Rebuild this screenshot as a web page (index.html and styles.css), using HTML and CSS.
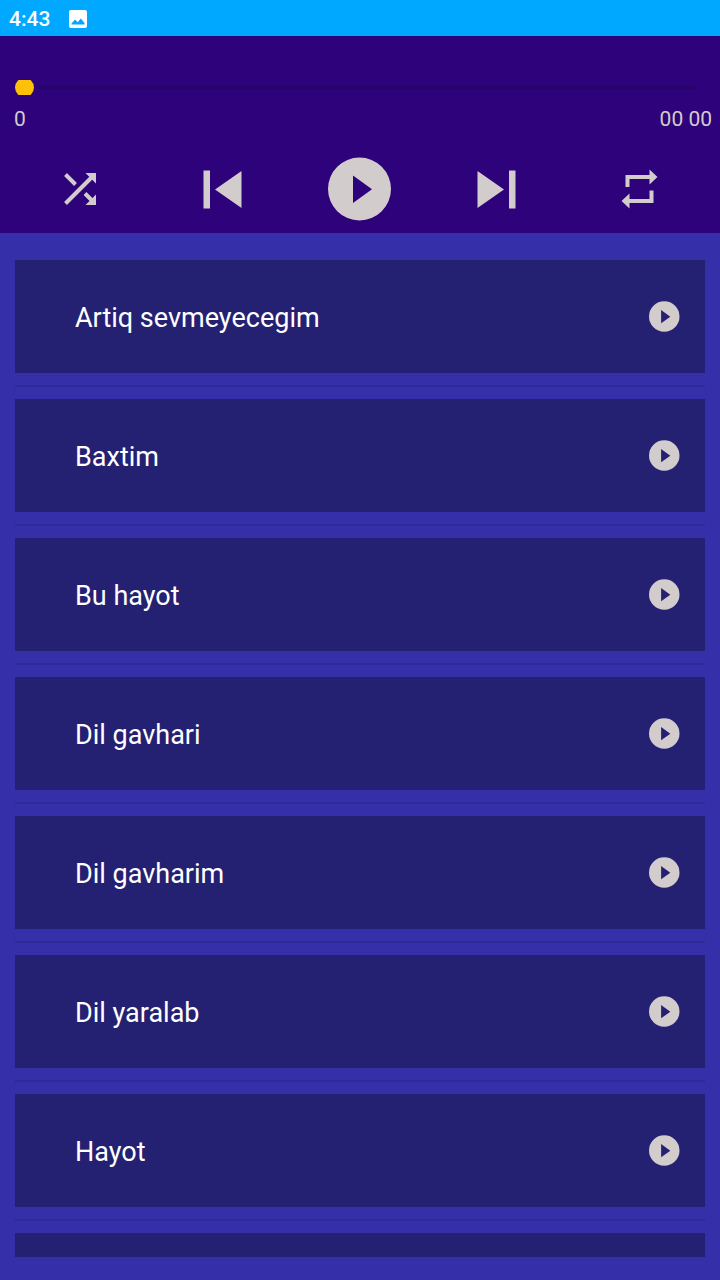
FILE: index.html
```html
<!DOCTYPE html>
<html lang="uz">
<head>
    <meta charset="UTF-8">
    <meta name="viewport" content="width=device-width, initial-scale=1.0">
    <title>Music Player</title>
    <link rel="stylesheet" href="styles.css">
</head>
<body>
    <svg class="sprite" aria-hidden="true">
        <symbol id="play" viewBox="0 0 64 64">
            <path fill-rule="evenodd" d="M31.500 .5a31.500 31.500 0 1 0 0 63a31.500 31.500 0 0 0 0-63zM25 18.500v27.500l19-13.700z"/>
        </symbol>
    </svg>

    <!-- Status bar -->
    <div class="status-bar">
        <span class="clock">4:43</span>
        <svg class="status-icon" viewBox="0 0 18 18">
            <path fill-rule="evenodd" d="M2 0h14a2 2 0 0 1 2 2v14a2 2 0 0 1-2 2H2a2 2 0 0 1-2-2V2a2 2 0 0 1 2-2zM2.500 14.500h13V13l-3.700-4.500-3 3.700L6 9.500l-3.500 4z"/>
        </svg>
    </div>

    <!-- Player -->
    <header class="player">
        <input class="seek" type="range" min="0" max="100" value="0" aria-label="Position">
        <div class="times">
            <span>0</span>
            <span>00 00</span>
        </div>
        <div class="controls">
            <button aria-label="Shuffle">
                <svg class="icon" viewBox="0 0 56 56">
                    <path d="M33.500 12H44v10.500zM44 33.500V44H33.500z"/>
                    <path d="M13.500 13.500L23.500 23.500M13.500 42.500L40 16M33 32.500l7 7" stroke="currentColor" stroke-width="4"/>
                </svg>
            </button>
            <button aria-label="Previous">
                <svg class="icon" viewBox="0 0 56 56">
                    <path d="M11.500 9.500H18v38h-6.500zM49.500 10v37L23 28.500z"/>
                </svg>
            </button>
            <button aria-label="Play">
                <svg class="icon-big"><use href="#play"/></svg>
            </button>
            <button aria-label="Next">
                <svg class="icon" viewBox="0 0 56 56">
                    <path d="M5.500 10v37L32 28.500zM37 9.500h6.500v38H37z"/>
                </svg>
            </button>
            <button aria-label="Repeat">
                <svg class="icon" viewBox="0 0 56 56">
                    <path d="M13.500 14h24V8.500l8 7.500-8 7.500V18h-20v8h-4zM41.500 29.500V42h-24v5.500l-8-7.500 8-7.500V38h20v-8.500z"/>
                </svg>
            </button>
        </div>
    </header>

    <!-- Song list -->
    <main>
        <ul class="songs">
            <li><span>Artiq sevmeyecegim</span><button aria-label="Play Artiq sevmeyecegim"><svg class="icon-small"><use href="#play"/></svg></button></li>
            <li><span>Baxtim</span><button aria-label="Play Baxtim"><svg class="icon-small"><use href="#play"/></svg></button></li>
            <li><span>Bu hayot</span><button aria-label="Play Bu hayot"><svg class="icon-small"><use href="#play"/></svg></button></li>
            <li><span>Dil gavhari</span><button aria-label="Play Dil gavhari"><svg class="icon-small"><use href="#play"/></svg></button></li>
            <li><span>Dil gavharim</span><button aria-label="Play Dil gavharim"><svg class="icon-small"><use href="#play"/></svg></button></li>
            <li><span>Dil yaralab</span><button aria-label="Play Dil yaralab"><svg class="icon-small"><use href="#play"/></svg></button></li>
            <li><span>Hayot</span><button aria-label="Play Hayot"><svg class="icon-small"><use href="#play"/></svg></button></li>
            <li></li>
        </ul>
    </main>
</body>
</html>
```
FILE: styles.css
```css
* {
    box-sizing: border-box;
}

body {
    display: flex;
    flex-direction: column;
    height: 100vh;
    margin: 0;
    font-family: Roboto, sans-serif;
    color: #fff;
    background: #3530a9;
}

.sprite {
    display: none;
}

svg {
    display: block;
    fill: currentColor;
}

button {
    padding: 0;
    border: none;
    background: none;
    color: #d3cccc;
    cursor: pointer;
}

.status-bar {
    display: flex;
    align-items: center;
    gap: 19px;
    height: 36px;
    padding: 1px 9px 0;
    background: #00a8ff;
}

.clock {
    font-size: 21px;
    font-weight: 500;
}

.status-icon {
    width: 18px;
    height: 18px;
}

.player {
    padding: 44px 0 12px;
    background: #2e027a;
}

/* Thumb is taller than the bar and gets cut off at top and bottom */
.seek {
    display: block;
    width: calc(100% - 30px);
    height: 15px;
    margin: 0 15px;
    appearance: none;
    background: linear-gradient(#29026c, #29026c) center / calc(100% - 20px) 3px no-repeat;
    clip-path: inset(0);
}

.seek::-webkit-slider-thumb {
    appearance: none;
    width: 19px;
    height: 19px;
    border-radius: 50%;
    background: #ffc107;
}

.times {
    display: flex;
    justify-content: space-between;
    padding: 12px 8px 0 14px;
    font-size: 21px;
    line-height: 24px;
    color: #d3cccc;
}

.controls {
    display: grid;
    grid-template-columns: repeat(5, 1fr);
    justify-items: center;
    align-items: center;
    padding: 26px 10px 0;
}

.icon {
    width: 56px;
    height: 56px;
}

.icon-big {
    width: 64px;
    height: 64px;
}

.icon-small {
    width: 31px;
    height: 31px;
}

main {
    flex: 1;
    min-height: 0;
    padding: 27px 15px 23px;
}

.songs {
    height: 100%;
    margin: 0;
    padding: 0;
    overflow: hidden;
    list-style: none;
}

.songs li {
    display: flex;
    align-items: center;
    justify-content: space-between;
    height: 113px;
    padding: 0 25px 0 60px;
    font-size: 27px;
    background: #252172;
}

.songs span {
    padding-top: 2px;
}

.songs li + li {
    margin-top: 26px;
    /* divider in the middle of the gap */
    box-shadow: 0 -12px #3530a9, 0 -14px #2f2a97;
}
```
